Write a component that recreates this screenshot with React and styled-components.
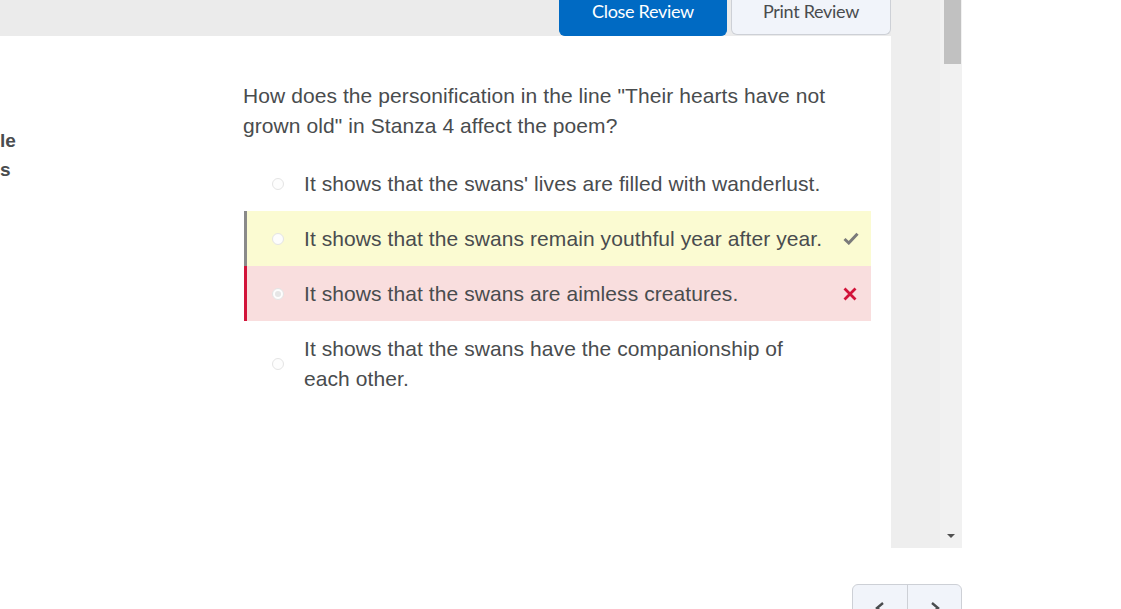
import React from "react";
import styled, { createGlobalStyle } from "styled-components";

const Global = createGlobalStyle`
  html, body { margin: 0; padding: 0; background: #fff; overflow: hidden; }
  body { font-family: "Liberation Sans", Arial, sans-serif; color: #494c4e; }
`;

const Page = styled.div`
  width: 1121px;
  height: 609px;
  overflow: hidden;
`;

const Frame = styled.div`
  display: flex;
  width: 962px;
  height: 548px;
`;

const Main = styled.div`
  width: 891px;
  display: flex;
  flex-direction: column;
`;

const TopBar = styled.div`
  height: 36px;
  background: #ebebeb;
  display: flex;
  justify-content: flex-end;
  align-items: flex-start;
  gap: 4px;
`;

const BarButton = styled.button`
  height: ${p => (p.$primary ? "36px" : "35px")};
  box-sizing: border-box;
  width: ${p => p.$w}px;
  border-radius: 0 0 6px 6px;
  border: 1px solid ${p => (p.$primary ? "#006ac3" : "#cdd0d6")};
  border-top: none;
  background: ${p => (p.$primary ? "#006ac3" : "#f1f4fa")};
  color: ${p => (p.$primary ? "#ffffff" : "#494c4e")};
  font-family: Lato, "Liberation Sans", sans-serif;
  font-size: 18px;
  letter-spacing: -0.3px;
  padding: 0 0 ${p => (p.$primary ? "14px" : "13px")};
  display: flex;
  align-items: center;
  justify-content: center;
`;

const Content = styled.div`
  flex: 1;
  display: flex;
  background: #fff;
`;

const Side = styled.div`
  width: 243px;
  padding-top: 90px;
  font-weight: bold;
  font-size: 19px;
  line-height: 29px;
  color: #494c4e;
`;

const QuestionCol = styled.div`
  width: 628px;
  padding-top: 45px;
`;

const Question = styled.div`
  font-size: 21px;
  letter-spacing: 0.08px;
  line-height: 30px;
  color: #494c4e;
  margin-bottom: 15px;
`;

const Options = styled.div`
  display: flex;
  flex-direction: column;
  margin-left: 1px;
`;

const Option = styled.div`
  display: flex;
  align-items: center;
  min-height: 55px;
  box-sizing: border-box;
  padding: ${p => (p.$tall ? "13px 0" : "0")};
  border-left: 3px solid ${p =>
    p.$state === "correct" ? "#8a8a8a" : p.$state === "wrong" ? "#d2143a" : "transparent"};
  background: ${p =>
    p.$state === "correct" ? "#fbfbd2" : p.$state === "wrong" ? "#f9dede" : "transparent"};
`;

const Radio = styled.span`
  width: 12px;
  height: 12px;
  box-sizing: border-box;
  border-radius: 50%;
  border: 1px solid #e4e4e4;
  background: #fdfdfd;
  margin-left: 25px;
  margin-right: 20px;
  flex-shrink: 0;
  display: flex;
  align-items: center;
  justify-content: center;
  &::after {
    content: "";
    width: 6px;
    height: 6px;
    border-radius: 50%;
    background: ${p => (p.$checked ? "#e6e6e6" : "transparent")};
  }
`;

const OptText = styled.span`
  flex: 1;
  font-size: 21px;
  letter-spacing: 0.08px;
  line-height: 30px;
  color: #494c4e;
  padding-right: 4px;
`;

const Mark = styled.span`
  width: 42px;
  flex-shrink: 0;
  display: flex;
  align-items: center;
  padding-left: 0;
  box-sizing: border-box;
  padding-left: 14px;
`;

const Gutter = styled.div`
  width: 49px;
  background: #eeeeee;
`;

const Scrollbar = styled.div`
  width: 22px;
  background: #f1f1f1;
  display: flex;
  flex-direction: column;
  justify-content: space-between;
  align-items: center;
`;

const Thumb = styled.div`
  width: 17px;
  height: 64px;
  margin-left: 3px;
  background: #c1c1c1;
`;

const Arrow = styled.div`
  width: 0;
  height: 0;
  border-left: 4px solid transparent;
  border-right: 4px solid transparent;
  border-top: 4px solid #505050;
  margin-bottom: 10px;
`;

const Footer = styled.div`
  width: 962px;
  display: flex;
  justify-content: flex-end;
  padding-top: 36px;
`;

const NavGroup = styled.div`
  display: flex;
  border: 1px solid #cdd0d6;
  border-radius: 6px;
  background: #f1f4fa;
  height: 44px;
  overflow: hidden;
`;

const NavBtn = styled.div`
  width: 54px;
  display: flex;
  justify-content: center;
  padding-top: 16px;
  box-sizing: border-box;
  & + & { border-left: 1px solid #cdd0d6; }
`;

const Check = () => (
  <svg width="16" height="13" viewBox="0 0 16 13">
    <path d="M1.5 7 L5.8 11 L14.5 1.8" fill="none" stroke="#7a7a7a" strokeWidth="3" strokeLinejoin="miter" />
  </svg>
);

const Cross = () => (
  <svg width="14" height="14" viewBox="0 0 14 14">
    <path d="M1.5 1.5 L12.5 12.5 M12.5 1.5 L1.5 12.5" stroke="#d2143a" strokeWidth="2.8" />
  </svg>
);

const Chevron = ({ dir }) => (
  <svg width="12" height="14" viewBox="0 0 12 14">
    <path d={dir === "left" ? "M9 2 L3 7 L9 12" : "M3 2 L9 7 L3 12"} fill="none" stroke="#494c4e" strokeWidth="2.4" />
  </svg>
);

const options = [
  { text: "It shows that the swans' lives are filled with wanderlust.", state: "none" },
  { text: "It shows that the swans remain youthful year after year.", state: "correct" },
  { text: "It shows that the swans are aimless creatures.", state: "wrong", checked: true },
  { text: "It shows that the swans have the companionship of each other.", state: "none", tall: true },
];

export default function App() {
  return (
    <Page>
      <Global />
      <Frame>
        <Main>
          <TopBar>
            <BarButton $primary $w={168}>Close Review</BarButton>
            <BarButton $w={160}>Print Review</BarButton>
          </TopBar>
          <Content>
            <Side>
              <div>le</div>
              <div>s</div>
            </Side>
            <QuestionCol>
              <Question>
                How does the personification in the line "Their hearts have not grown old" in Stanza 4 affect the poem?
              </Question>
              <Options>
                {options.map((o, i) => (
                  <Option key={i} $state={o.state} $tall={o.tall}>
                    <Radio $checked={o.checked} />
                    <OptText>{o.text}</OptText>
                    <Mark>
                      {o.state === "correct" && <Check />}
                      {o.state === "wrong" && <Cross />}
                    </Mark>
                  </Option>
                ))}
              </Options>
            </QuestionCol>
          </Content>
        </Main>
        <Gutter />
        <Scrollbar>
          <Thumb />
          <Arrow />
        </Scrollbar>
      </Frame>
      <Footer>
        <NavGroup>
          <NavBtn><Chevron dir="left" /></NavBtn>
          <NavBtn><Chevron dir="right" /></NavBtn>
        </NavGroup>
      </Footer>
    </Page>
  );
}
